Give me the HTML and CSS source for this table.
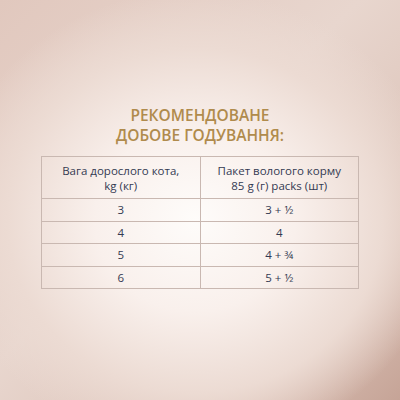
FILE: index.html
```html
<!DOCTYPE html>
<html lang="uk">
<head>
<meta charset="utf-8">
<link rel="stylesheet" href="styles.css">
</head>
<body>
<div class="page">
  <h1 class="title">РЕКОМЕНДОВАНЕ<br>ДОБОВЕ ГОДУВАННЯ:</h1>
  <table class="feed">
    <tr class="head">
      <td>Вага дорослого кота,<br>kg (кг)</td>
      <td>Пакет вологого корму<br>85 g (г) packs (шт)</td>
    </tr>
    <tr><td>3</td><td>3 + ½</td></tr>
    <tr><td>4</td><td>4</td></tr>
    <tr><td>5</td><td>4 + ¾</td></tr>
    <tr><td>6</td><td>5 + ½</td></tr>
  </table>
</div>
</body>
</html>
```
FILE: styles.css
```css
html, body {
  margin: 0;
  padding: 0;
}
.page {
  width: 400px;
  height: 400px;
  box-sizing: border-box;
  padding-top: 105px;
  display: flex;
  flex-direction: column;
  align-items: center;
  font-family: "Open Sans", "Liberation Sans", sans-serif;
  background:
    radial-gradient(ellipse 250px 230px at 195px 220px, #fefcfa 0%, #f9f0ec 40%, #ecdbd3 75%, rgba(234,216,208,0) 100%),
    linear-gradient(135deg, #e1c8be 0%, #e8d6ce 45%, #dac0b5 80%, #c6a497 100%);
}
.title {
  margin: 0;
  font-size: 15.5px;
  line-height: 20px;
  font-weight: 600;
  color: #b08b4c;
  text-align: center;
}
.feed {
  margin-top: 11px;
  width: 318px;
  border-collapse: collapse;
  color: #343a52;
  font-size: 11.5px;
}
.feed td {
  width: 50%;
  border: 1px solid #c9b8b1;
  text-align: center;
  padding: 0;
  height: 21.5px;
  line-height: 15px;
}
.feed .head td {
  height: 41px;
}
```
